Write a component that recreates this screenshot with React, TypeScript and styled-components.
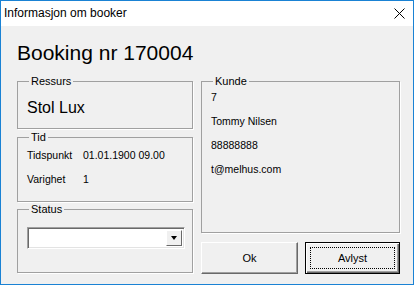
import styled, { createGlobalStyle } from 'styled-components'

const GlobalStyle = createGlobalStyle`
  html, body {
    margin: 0;
    padding: 0;
    background: #ffffff;
  }
  body {
    font-family: "Liberation Sans", Arial, sans-serif;
    color: #000000;
  }
`

const Window = styled.div`
  width: 414px;
  height: 285px;
  box-sizing: border-box;
  border: 1px solid #1a82d4;
  display: flex;
  flex-direction: column;
  background: #f0f0f0;
`

const TitleBar = styled.div`
  height: 25px;
  flex: none;
  background: #ffffff;
  display: flex;
  align-items: center;
  justify-content: space-between;
  padding: 0 8px 0 3px;
  font-size: 12px;
  line-height: 25px;
`

const CloseIcon = styled.svg`
  display: block;
  width: 11px;
  height: 11px;
`

const Body = styled.div`
  flex: 1;
  padding: 14px 0 0 16px;
`

const Heading = styled.h1`
  margin: 0 0 8px;
  font-size: 21px;
  line-height: 26px;
  font-weight: normal;
`

const Columns = styled.div`
  display: grid;
  grid-template-columns: 176px 199px;
  column-gap: 8px;
`

const Column = styled.div`
  display: flex;
  flex-direction: column;
  gap: ${(p: { $gap: number }) => p.$gap}px;
`

const Group = styled.fieldset<{ $height: number; $pad: string }>`
  margin: 0;
  min-width: 0;
  box-sizing: border-box;
  height: ${(p) => p.$height}px;
  padding: ${(p) => p.$pad};
  border: 1px solid #a0a0a0;
  box-shadow: 1px 1px 0 #ffffff;
`

const Legend = styled.legend`
  margin-left: 2px;
  padding: 0 2px;
  font-size: 11px;
  line-height: 14px;
`

const BigValue = styled.div`
  font-size: 16px;
  line-height: 19px;
`

const Rows = styled.div`
  display: flex;
  flex-direction: column;
  gap: 10px;
  font-size: 10.5px;
  line-height: 14px;
`

const FieldRow = styled.div`
  display: grid;
  grid-template-columns: 56px 1fr;
`

const Combo = styled.div`
  width: 158px;
  height: 22px;
  box-sizing: border-box;
  background: #ffffff;
  border: 1px solid;
  border-color: #a0a0a0 #ffffff #ffffff #a0a0a0;
  box-shadow: inset 1px 1px 0 #696969, inset -1px -1px 0 #e3e3e3;
  display: flex;
  justify-content: flex-end;
  padding: 2px;
`

const ComboButton = styled.div`
  width: 16px;
  box-sizing: border-box;
  background: #f0f0f0;
  border: 1px solid;
  border-color: #ffffff #696969 #696969 #ffffff;
  display: flex;
  align-items: center;
  justify-content: center;
`

const Arrow = styled.div`
  width: 0;
  height: 0;
  border-left: 3.5px solid transparent;
  border-right: 3.5px solid transparent;
  border-top: 4px solid #000000;
`

const Buttons = styled.div`
  display: grid;
  grid-template-columns: 97px 95px;
  column-gap: 7px;
`

const DialogButton = styled.button<{ $default?: boolean }>`
  height: 32px;
  margin: 0;
  padding: 0;
  box-sizing: border-box;
  font-family: "Liberation Sans", Arial, sans-serif;
  font-size: 11px;
  color: #000000;
  background: #f0f0f0;
  border: 1px solid;
  border-color: ${(p) => (p.$default ? '#000000' : '#ffffff #696969 #696969 #ffffff')};
  box-shadow: ${(p) =>
    p.$default
      ? 'inset 1px 1px 0 #ffffff, inset -1px -1px 0 #696969, inset -2px -2px 0 #a0a0a0'
      : 'inset -1px -1px 0 #a0a0a0'};
  position: relative;
`

const FocusRing = styled.span`
  position: absolute;
  inset: 4px;
  border: 1px dotted #000000;
  display: flex;
  align-items: center;
  justify-content: center;
`

function App() {
  return (
    <>
      <GlobalStyle />
      <Window>
        <TitleBar>
          <span>Informasjon om booker</span>
          <CloseIcon viewBox="0 0 11 11">
            <path d="M0.5 0.5 L10.5 10.5 M10.5 0.5 L0.5 10.5" stroke="#000" strokeWidth="1" fill="none" />
          </CloseIcon>
        </TitleBar>
        <Body>
          <Heading>Booking nr 170004</Heading>
          <Columns>
            <Column $gap={1}>
              <Group $height={55} $pad="10px 0 0 9px">
                <Legend>Ressurs</Legend>
                <BigValue>Stol Lux</BigValue>
              </Group>
              <Group $height={72} $pad="4px 0 0 9px">
                <Legend>Tid</Legend>
                <Rows>
                  <FieldRow>
                    <span>Tidspunkt</span>
                    <span>01.01.1900 09.00</span>
                  </FieldRow>
                  <FieldRow>
                    <span>Varighet</span>
                    <span>1</span>
                  </FieldRow>
                </Rows>
              </Group>
              <Group $height={71} $pad="11px 0 0 9px" style={{ marginTop: -1 }}>
                <Legend>Status</Legend>
                <Combo>
                  <ComboButton>
                    <Arrow />
                  </ComboButton>
                </Combo>
              </Group>
            </Column>
            <Column $gap={9}>
              <Group $height={159} $pad="2px 0 0 9px">
                <Legend>Kunde</Legend>
                <Rows>
                  <span>7</span>
                  <span>Tommy Nilsen</span>
                  <span>88888888</span>
                  <span>t@melhus.com</span>
                </Rows>
              </Group>
              <Buttons>
                <DialogButton>Ok</DialogButton>
                <DialogButton $default>
                  <FocusRing>Avlyst</FocusRing>
                </DialogButton>
              </Buttons>
            </Column>
          </Columns>
        </Body>
      </Window>
    </>
  )
}

export default App
